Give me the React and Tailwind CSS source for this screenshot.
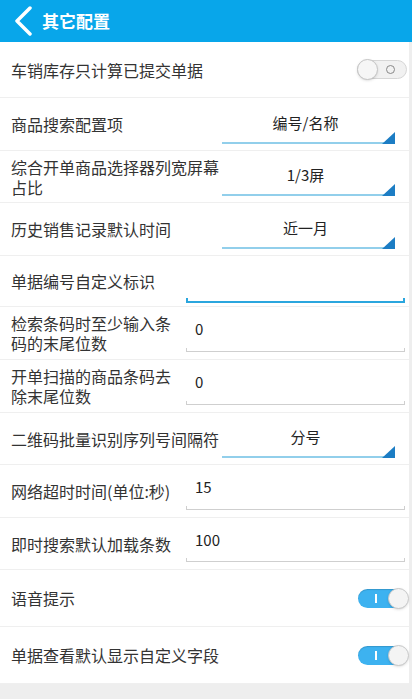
import { useState } from "react";

const font = { fontFamily: '"Noto Sans CJK SC", "Noto Sans", sans-serif' };

function Toggle({ on }) {
  if (on) {
    return (
      <div className="relative w-[50px] h-[19px] rounded-full bg-[#3db2f0] shadow-[inset_0_1px_1px_rgba(0,0,0,0.15)]">
        <div className="absolute left-[17px] top-[5px] w-[2px] h-[9px] bg-white" />
        <div className="absolute right-[-1px] top-[-1px] w-[21px] h-[21px] rounded-full bg-[#f4f4f4] border border-[#c8c8c8] shadow" />
      </div>
    );
  }
  return (
    <div className="relative w-[50px] h-[19px] rounded-full bg-[#f1f1f1] border border-[#d6d6d6]">
      <div className="absolute right-[11px] top-[4px] w-[9px] h-[9px] rounded-full border border-[#888]" />
      <div className="absolute left-[-1px] top-[-2px] w-[21px] h-[21px] rounded-full bg-[#f6f6f6] border border-[#c4c4c4] shadow" />
    </div>
  );
}

function SelectBox({ value }) {
  return (
    <div className="w-[173px] self-stretch flex flex-col">
      <div className="flex-1 flex items-center justify-center pt-[6px] pr-[6px] text-[15px] text-[#222]">
        {value}
      </div>
      <div className="relative h-[2px] bg-[#92cfeb] mb-[6px]">
        <svg className="absolute right-0 bottom-0" width="13" height="12" viewBox="0 0 13 12">
          <polygon points="13,0 13,12 0,12" fill="#1c7dc4" />
        </svg>
      </div>
    </div>
  );
}

function InputBox({ value, focused }) {
  return (
    <div className="w-[219px] self-stretch flex flex-col">
      <div className="flex-1 flex items-center pt-[4px] pl-[9px] text-[15px] text-[#222]">{value}</div>
      {focused ? (
        <div className="h-[5px] border-x-2 border-b-2 border-[#2aa6de] mb-[3px]" />
      ) : (
        <div className="h-[4px] border-x border-b border-[#cfcfcf] mb-[7px]" />
      )}
    </div>
  );
}

function Row({ label, labelWidth, children, h }) {
  return (
    <div className={`flex items-center pl-[11px] border-b border-[#efefef] ${h}`}>
      <div
        className="text-[16px] leading-[20px] text-[#333]"
        style={labelWidth ? { width: labelWidth } : undefined}
      >
        {label}
      </div>
      {children}
    </div>
  );
}

export default function App() {
  const [voice] = useState(true);

  return (
    <div className="w-[412px] h-[699px] bg-[#eeeeee] overflow-hidden" style={font}>
      <div className="h-[42px] bg-[#08a6ea] flex items-center">
        <svg className="ml-[13px]" width="20" height="30" viewBox="0 0 20 30">
          <polyline
            points="17,2 4,15 17,28"
            fill="none"
            stroke="white"
            strokeWidth="3.5"
            strokeLinecap="round"
            strokeLinejoin="round"
          />
        </svg>
        <span className="ml-[9px] text-white text-[17px] font-bold">其它配置</span>
      </div>

      <div className="w-[409px] bg-white">
        <Row label="车销库存只计算已提交单据" h="h-[56px]">
          <div className="ml-auto mr-[2px]">
            <Toggle on={false} />
          </div>
        </Row>
        <Row label="商品搜索配置项" labelWidth="211px" h="h-[53px]">
          <SelectBox value="编号/名称" />
        </Row>
        <Row label="综合开单商品选择器列宽屏幕占比" labelWidth="211px" h="h-[52px]">
          <SelectBox value="1/3屏" />
        </Row>
        <Row label="历史销售记录默认时间" labelWidth="211px" h="h-[53px]">
          <SelectBox value="近一月" />
        </Row>
        <Row label="单据编号自定义标识" labelWidth="175px" h="h-[51px]">
          <InputBox value="" focused />
        </Row>
        <Row label="检索条码时至少输入条码的末尾位数" labelWidth="175px" h="h-[53px]">
          <InputBox value="0" />
        </Row>
        <Row label="开单扫描的商品条码去除末尾位数" labelWidth="175px" h="h-[53px]">
          <InputBox value="0" />
        </Row>
        <Row label="二维码批量识别序列号间隔符" labelWidth="211px" h="h-[52px]">
          <SelectBox value="分号" />
        </Row>
        <Row label="网络超时时间(单位:秒)" labelWidth="175px" h="h-[53px]">
          <InputBox value="15" />
        </Row>
        <Row label="即时搜索默认加载条数" labelWidth="175px" h="h-[52px]">
          <InputBox value="100" />
        </Row>
        <Row label="语音提示" h="h-[57px]">
          <div className="ml-auto mr-[1px]">
            <Toggle on={voice} />
          </div>
        </Row>
        <Row label="单据查看默认显示自定义字段" h="h-[57px]">
          <div className="ml-auto mr-[1px]">
            <Toggle on />
          </div>
        </Row>
      </div>
    </div>
  );
}
